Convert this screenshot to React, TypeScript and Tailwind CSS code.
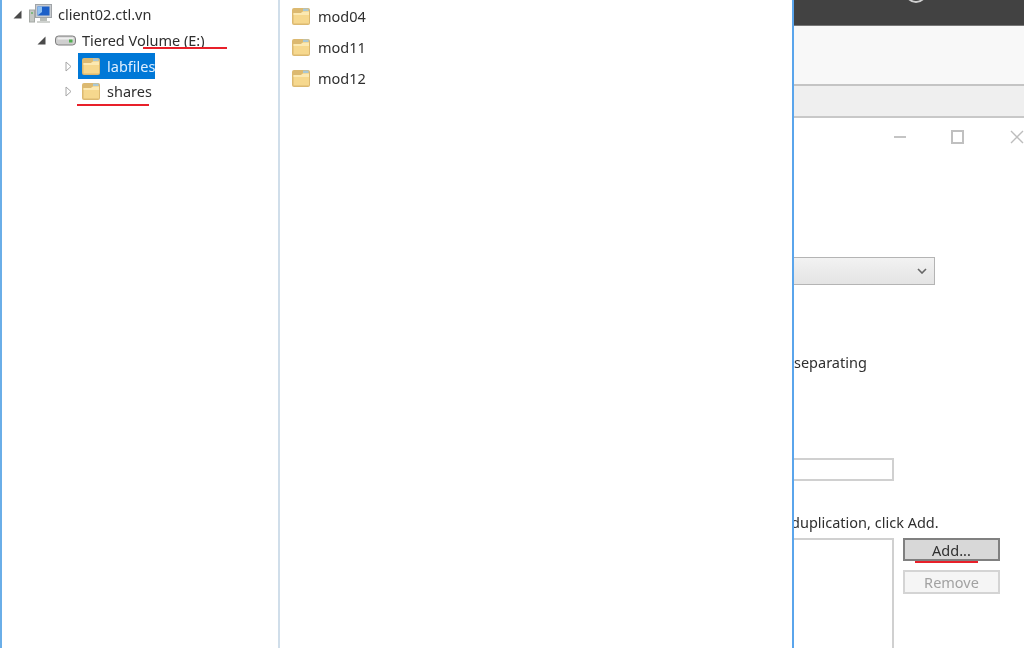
const font = { fontFamily: '"Noto Sans", "Open Sans", sans-serif' };

function FolderIcon({ className }: { className?: string }) {
    return (
        <svg className={className} width="20" height="19" viewBox="0 0 20 19">
            <path d="M1 3 Q1 1 3 1 H17 Q19 1 19 3 V16 Q19 18 17 18 H3 Q1 18 1 16 Z" fill="#dcb970" />
            <rect x="12" y="1.5" width="5.5" height="2.5" fill="#a9c8d4" />
            <path d="M2.5 6 H10 L12 4.5 H18 V16.5 H2.5 Z" fill="#f6d88e" />
            <path d="M2.5 6 H10 L12 4.5 H18 V8 H2.5 Z" fill="#fce9b2" />
        </svg>
    );
}

function FilledArrow() {
    return (
        <svg width="9" height="9" viewBox="0 0 9 9">
            <path d="M8.5 0.5 V8.5 H0.5 Z" fill="#4a4a4a" />
        </svg>
    );
}

function HollowArrow() {
    return (
        <svg width="7" height="11" viewBox="0 0 7 11">
            <path d="M1 1 L6 5.5 L1 10 Z" fill="#fff" stroke="#a6a6a6" strokeWidth="1" />
        </svg>
    );
}

function ComputerIcon() {
    return (
        <svg width="23" height="20" viewBox="0 0 23 20">
            <rect x="0.5" y="6" width="5" height="12" fill="#c4c8c4" stroke="#a4a8a4" strokeWidth="1" />
            <rect x="2" y="8" width="2" height="2" fill="#7fb87f" />
            <rect x="6.5" y="0.5" width="16" height="13" fill="#c8ccd0" stroke="#a0a4a8" strokeWidth="1" />
            <rect x="8.5" y="2.5" width="12" height="9" fill="#1c5fc8" />
            <path d="M8.5 2.5 H13 V8 L8.5 11.5 Z" fill="#8fc0f0" />
            <rect x="11" y="14" width="7" height="3" fill="#b8bcb8" />
            <rect x="8" y="17" width="13" height="2" fill="#cfd2cf" />
        </svg>
    );
}

function DriveIcon() {
    return (
        <svg width="21" height="11" viewBox="0 0 21 11">
            <rect x="0.5" y="1" width="20" height="9" rx="3" fill="#cfcfcf" stroke="#7e7e7e" strokeWidth="1" />
            <rect x="2.5" y="2.5" width="16" height="2" fill="#efefef" />
            <rect x="14" y="4.5" width="3.5" height="3" fill="#4fae4f" />
        </svg>
    );
}

function Underline({ className }: { className: string }) {
    return <div className={`absolute h-[2px] bg-[#e8202a] ${className}`} />;
}

export default function App() {
    const mods = ['mod04', 'mod11', 'mod12'];

    return (
        <div style={font} className="relative flex w-[1024px] h-[648px] overflow-hidden bg-white text-[14.5px] text-[#2f2f2f] blur-[0.5px]">
            {/* Tree pane */}
            <div className="w-[280px] h-full shrink-0 bg-white border-l-2 border-l-[#6aaee8] border-r-2 border-r-[#d0deea] pt-[1px]">
                <div className="flex items-center h-[26px] pl-[11px]">
                    <FilledArrow />
                    <div className="ml-[7px]"><ComputerIcon /></div>
                    <span className="ml-[6px] mt-[2px]">client02.ctl.vn</span>
                </div>
                <div className="flex items-center h-[26px] pl-[35px]">
                    <FilledArrow />
                    <div className="ml-[9px]"><DriveIcon /></div>
                    <span className="ml-[6px] mt-[2px]">Tiered Volume (E:)</span>
                </div>
                <div className="flex items-center h-[26px] pl-[63px]">
                    <HollowArrow />
                    <div className="flex items-center ml-[6px] w-[77px] h-[26px] pl-[3px] bg-[#0078d7] text-[#dfefff] overflow-hidden">
                        <FolderIcon className="shrink-0" />
                        <span className="ml-[6px] mt-[2px]">labfiles</span>
                    </div>
                </div>
                <div className="flex items-center h-[26px] pl-[63px] -mt-[1px]">
                    <HollowArrow />
                    <div className="flex items-center ml-[9px]">
                        <FolderIcon className="shrink-0" />
                        <span className="ml-[6px] mt-[2px]">shares</span>
                    </div>
                </div>
            </div>

            {/* File list */}
            <div className="w-[514px] h-full shrink-0 bg-white pl-[11px] pt-[1px] border-r-2 border-r-[#5aa5ec]">
                {mods.map((m) => (
                    <div key={m} className="flex items-center h-[31px]">
                        <FolderIcon />
                        <span className="ml-[7px]">{m}</span>
                    </div>
                ))}
            </div>

            {/* Dialog behind */}
            <div className="flex-1 h-full flex flex-col overflow-hidden">
                <div className="h-[26px] shrink-0 bg-[#424242] border-b border-b-[#777]" />
                <div className="h-[60px] shrink-0 bg-[#f8f8f8] border-b-2 border-b-[#c4c4c4]" />
                <div className="h-[32px] shrink-0 bg-[#efefef] border-b-2 border-b-[#c8c8c8]" />
                <div className="flex-1 min-h-0 bg-white flex flex-col overflow-hidden">
                    <div className="flex items-center shrink-0 h-[38px] pl-[100px]">
                        <div className="w-[13px] h-[2px] bg-[#c4c4c4]" />
                        <div className="ml-[45px] w-[14px] h-[14px] border-2 border-[#c0c0c0]" />
                        <svg className="ml-[46px] shrink-0" width="14" height="14" viewBox="0 0 14 14">
                            <path d="M1 1 L13 13 M13 1 L1 13" stroke="#bdbdbd" strokeWidth="1.4" fill="none" />
                        </svg>
                    </div>
                    <div className="flex items-center justify-end shrink-0 w-[141px] h-[28px] mt-[101px] pr-[7px] bg-gradient-to-b from-[#f2f2f2] to-[#e4e4e4] border border-[#b4b4b4] border-l-0">
                        <svg width="10" height="6" viewBox="0 0 10 6">
                            <path d="M1 1 L5 5 L9 1" stroke="#666" strokeWidth="1.6" fill="none" />
                        </svg>
                    </div>
                    <div className="shrink-0 mt-[67px] h-[20px] leading-[20px]">separating</div>
                    <div className="shrink-0 w-[100px] h-[23px] mt-[86px] border-2 border-[#d0d0d0] border-l-0" />
                    <div className="shrink-0 mt-[31px] -ml-[3px] h-[20px] leading-[20px] whitespace-nowrap">duplication, click Add.</div>
                    <div className="flex flex-1 min-h-0 mt-[6px]">
                        <div className="w-[100px] h-full border-2 border-[#d0d0d0] border-l-0 border-b-0" />
                        <div className="ml-[9px] w-[97px] flex flex-col gap-[9px]">
                            <div className="h-[23px] pt-[2px] flex items-center justify-center bg-[#d8d8d8] border-2 border-[#808080]">Add...</div>
                            <div className="h-[24px] pt-[2px] flex items-center justify-center bg-[#f5f5f5] border-2 border-[#d4d4d4] text-[#a2a2a2]">Remove</div>
                        </div>
                    </div>
                </div>
            </div>

            {/* Overlays */}
            <div className="absolute left-[905px] top-[-19px] w-[22px] h-[22px] rounded-full border-2 border-[#cfcfcf]" />
            <Underline className="left-[143px] top-[47px] w-[84px]" />
            <Underline className="left-[77px] top-[104px] w-[72px]" />
            <Underline className="left-[915px] top-[561px] w-[63px]" />
        </div>
    );
}
